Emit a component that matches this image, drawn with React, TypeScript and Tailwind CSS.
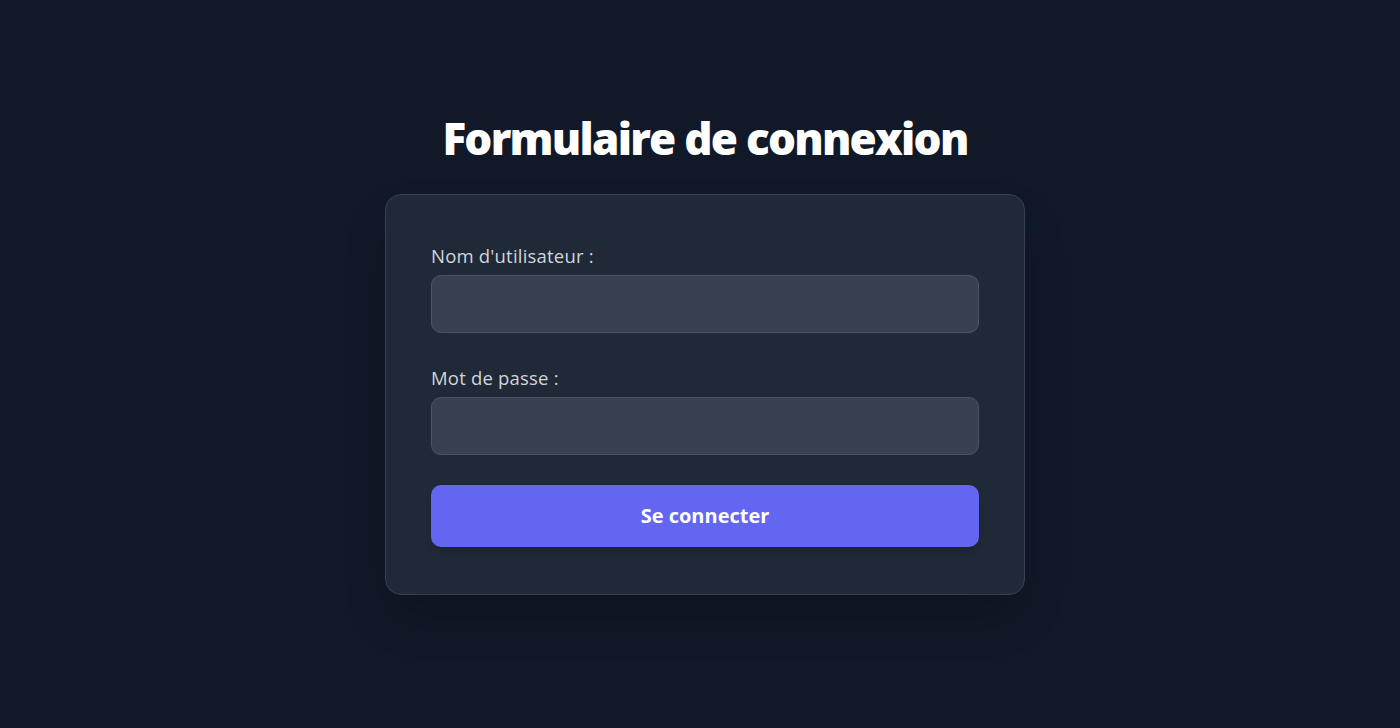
import React from 'react';

const App: React.FC = () => {
  return (
    <div className="min-h-screen w-full bg-[#111827] font-['Open_Sans',sans-serif] flex flex-col items-center pt-[110px] pl-[10px]">
      <h1 className="text-[44px] leading-[56px] font-extrabold text-white tracking-[-1.75px]">Formulaire de connexion</h1>
      <form
        className="mt-[28px] w-[640px] bg-[#1f2937] border border-[#374151] rounded-[16px] shadow-2xl px-[45px] pt-[47px] pb-[47px] flex flex-col"
        onSubmit={(e) => e.preventDefault()}
      >
        <label className="text-[18.5px] leading-[27px] text-[#d1d5db] tracking-[0.2px]">Nom d'utilisateur :</label>
        <input type="text" className="mt-[6px] h-[58px] w-full bg-[#374151] border border-[#4b5563] rounded-[10px] px-4 text-white outline-none" />
        <label className="mt-[31px] text-[18.5px] leading-[27px] text-[#d1d5db] tracking-[0.2px]">Mot de passe :</label>
        <input type="password" className="mt-[6px] h-[58px] w-full bg-[#374151] border border-[#4b5563] rounded-[10px] px-4 text-white outline-none" />
        <button type="submit" className="mt-[30px] h-[62px] w-full bg-[#6366f1] rounded-[10px] text-white font-bold text-[20px] shadow-md">
          Se connecter
        </button>
      </form>
    </div>
  );
};

export default App;
